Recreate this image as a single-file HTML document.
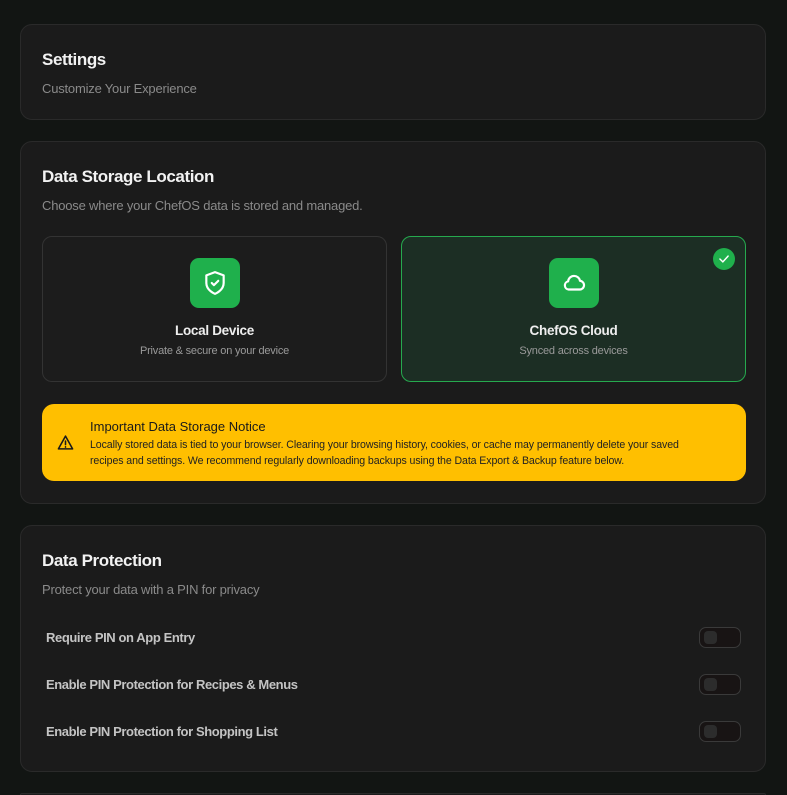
<!DOCTYPE html><html><head><style>
html,body{margin:0;width:787px;height:795px;overflow:hidden}
body{background:#121513;font-family:"Liberation Sans",sans-serif;position:relative}
.card{position:absolute;left:20px;width:746px;background:#1b1b1b;border:1px solid #2a2a2a;border-radius:12px;box-sizing:border-box}
.h{position:absolute;left:21px;color:#f2f2f2;font-weight:bold;font-size:17px;letter-spacing:-0.4px}
.s{position:absolute;left:21px;color:#8a8a8a;font-size:13px;letter-spacing:-0.2px}
.opt{position:absolute;top:236px;width:345px;height:146px;border:1px solid #333;border-radius:10px;box-sizing:border-box;background:#1c1c1c;text-align:center}
.ic{position:absolute;left:147px;top:21px;width:50px;height:50px;border-radius:9px;background:#1fb04c;display:flex;align-items:center;justify-content:center}
.t{position:absolute;left:0;right:0;top:86px;color:#eee;font-weight:bold;font-size:13.5px;letter-spacing:-0.3px}
.d{position:absolute;left:0;right:0;top:108px;color:#9a9a9a;font-size:11px;letter-spacing:-0.2px}
.row{position:absolute;left:25px;color:#c4c4c4;font-size:13px;font-weight:bold;letter-spacing:-0.4px}
.tg{position:absolute;left:678px;width:42px;height:21px;border:1px solid #3a3a3a;border-radius:7px;box-sizing:border-box;background:#181414}
.tg:after{content:"";position:absolute;left:4px;top:3px;width:13px;height:13px;border-radius:4px;background:#2c2c2c}
</style></head><body>
<div class="card" style="top:24px;height:96px"><div class="h" style="top:25px">Settings</div><div class="s" style="top:56px">Customize Your Experience</div></div>
<div class="card" style="top:141px;height:363px"><div class="h" style="top:25px">Data Storage Location</div><div class="s" style="top:56px">Choose where your ChefOS data is stored and managed.</div></div>
<div class="opt" style="left:42px"><div class="ic"><svg width="26" height="26" viewBox="0 0 24 24" fill="none" stroke="#fff" stroke-width="2" stroke-linecap="round" stroke-linejoin="round"><path d="M12 22s8-3 8-10V5l-8-3-8 3v7c0 7 8 10 8 10z"/><path d="M9 12l2 2 4-4"/></svg></div><div class="t">Local Device</div><div class="d">Private &amp; secure on your device</div></div>
<div class="opt" style="left:401px;background:#1c2e24;border-color:#26a94e"><div class="ic"><svg width="26" height="26" viewBox="0 0 24 24" fill="none" stroke="#fff" stroke-width="2" stroke-linejoin="round"><path d="M7 18h10a4 4 0 0 0 .5-8A5.5 5.5 0 0 0 6.6 10.5 3.8 3.8 0 0 0 7 18z"/></svg></div><div class="t">ChefOS Cloud</div><div class="d">Synced across devices</div>
<div style="position:absolute;left:311px;top:11px;width:22px;height:22px;border-radius:50%;background:#1fb04c;display:flex;align-items:center;justify-content:center"><svg width="14" height="14" viewBox="0 0 24 24" fill="none" stroke="#fff" stroke-width="2.5" stroke-linecap="round" stroke-linejoin="round"><path d="M5 12l5 5 9-10"/></svg></div></div>
<div style="position:absolute;left:42px;top:404px;width:704px;height:77px;background:#ffbf00;border-radius:12px">
<svg style="position:absolute;left:15px;top:30px" width="17" height="17" viewBox="0 0 24 24" fill="none" stroke="#1a1a1a" stroke-width="2.2" stroke-linejoin="round" stroke-linecap="round"><path d="M12 3L2 21h20z"/><path d="M12 10v5M12 18v.5"/></svg>
<div style="position:absolute;left:48px;top:15px;color:#1a1a1a;font-size:13px">Important Data Storage Notice</div>
<div style="position:absolute;left:48px;top:33px;width:600px;color:#222;font-size:10.6px;line-height:16px;letter-spacing:-0.1px">Locally stored data is tied to your browser. Clearing your browsing history, cookies, or cache may permanently delete your saved recipes and settings. We recommend regularly downloading backups using the Data Export &amp; Backup feature below.</div></div>
<div class="card" style="top:525px;height:247px"><div class="h" style="top:25px">Data Protection</div><div class="s" style="top:56px">Protect your data with a PIN for privacy</div>
<div class="row" style="top:104px">Require PIN on App Entry</div><div class="tg" style="top:101px"></div>
<div class="row" style="top:151px">Enable PIN Protection for Recipes &amp; Menus</div><div class="tg" style="top:148px"></div>
<div class="row" style="top:198px">Enable PIN Protection for Shopping List</div><div class="tg" style="top:195px"></div></div>
<div class="card" style="top:793px;height:2px;border-bottom:none;border-radius:12px 12px 0 0"></div>
</body></html>
